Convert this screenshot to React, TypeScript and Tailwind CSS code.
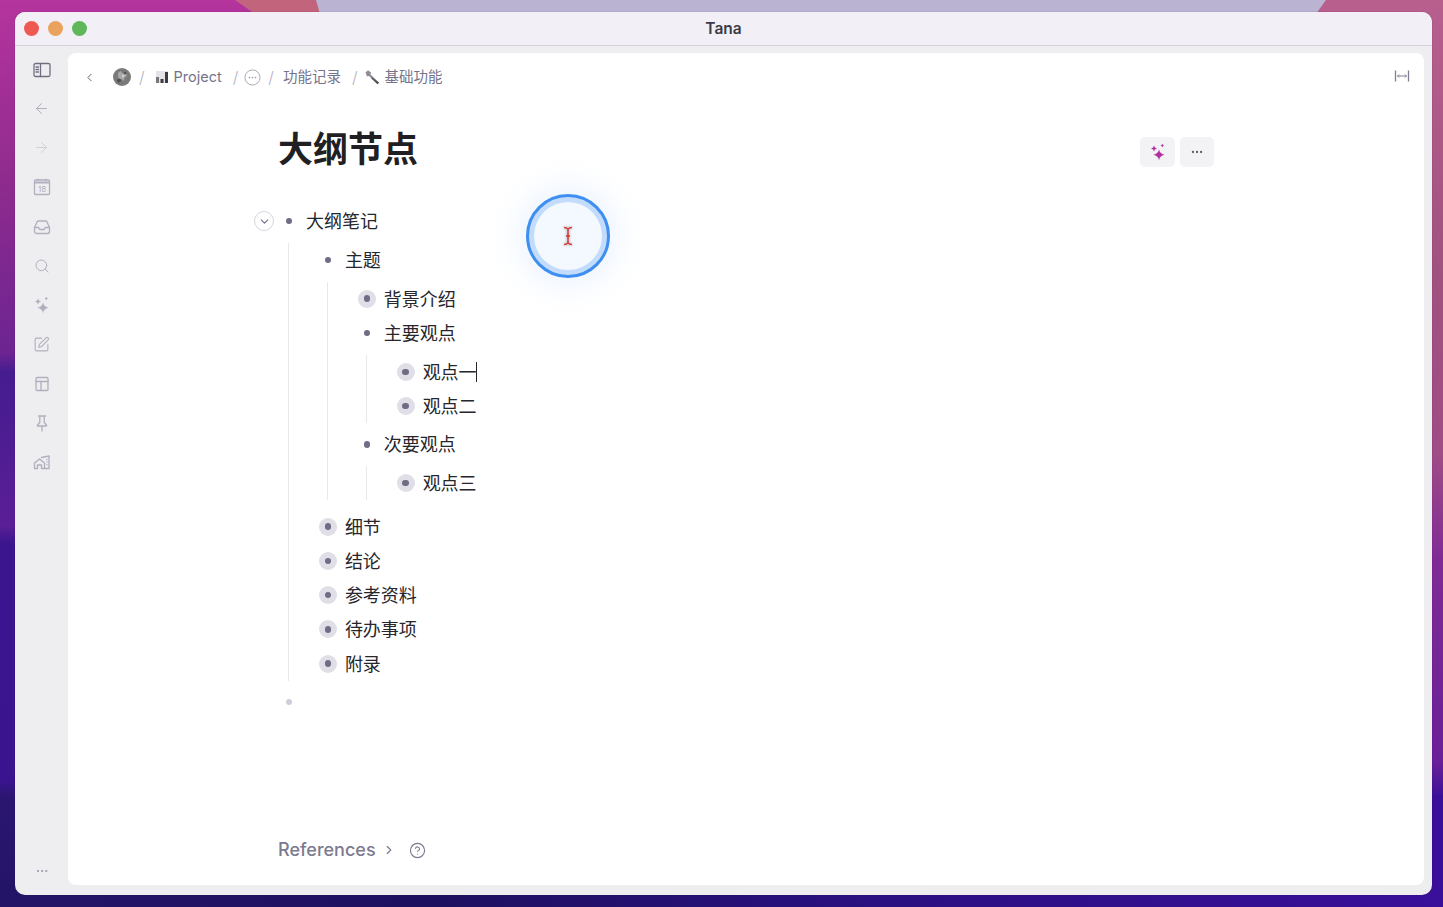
import { ArrowLeft, ArrowRight, ChevronDown, ChevronLeft, ChevronRight, CircleHelp, Ellipsis, Search, SquarePen } from 'lucide-react'
import type { ReactNode } from 'react'

type OutlineNode = {
	text: string
	// a halo round the bullet means the node has no children yet
	children?: OutlineNode[]
	caret?: boolean
	toggle?: boolean
}

const outline: OutlineNode[] = [
	{
		text: '大纲笔记',
		toggle: true,
		children: [
			{
				text: '主题',
				children: [
					{ text: '背景介绍' },
					{
						text: '主要观点',
						children: [{ text: '观点一', caret: true }, { text: '观点二' }],
					},
					{ text: '次要观点', children: [{ text: '观点三' }] },
				],
			},
			{ text: '细节' },
			{ text: '结论' },
			{ text: '参考资料' },
			{ text: '待办事项' },
			{ text: '附录' },
		],
	},
]

function Wallpaper() {
	return (
		<svg className="absolute inset-0 h-full w-full" viewBox="0 0 1443 907" preserveAspectRatio="none">
			<defs>
				<linearGradient id="wl" x1="0" y1="0" x2="0" y2="1">
					<stop offset="0" stopColor="#b5349e" />
					<stop offset="0.2" stopColor="#8f2b8e" />
					<stop offset="0.39" stopColor="#6c2492" />
					<stop offset="0.41" stopColor="#451c90" />
					<stop offset="0.58" stopColor="#5a1e96" />
					<stop offset="0.6" stopColor="#3a158e" />
					<stop offset="0.86" stopColor="#3a1490" />
					<stop offset="0.88" stopColor="#2a1670" />
					<stop offset="1" stopColor="#241468" />
				</linearGradient>
				<linearGradient id="wr" x1="0" y1="0" x2="0" y2="1">
					<stop offset="0" stopColor="#b85f8e" />
					<stop offset="0.3" stopColor="#a0527e" />
					<stop offset="0.5" stopColor="#a04c86" />
					<stop offset="0.62" stopColor="#7f2a96" />
					<stop offset="0.84" stopColor="#6a2098" />
					<stop offset="0.88" stopColor="#3a0f9a" />
					<stop offset="1" stopColor="#3a0f9a" />
				</linearGradient>
				<linearGradient id="wb" x1="0" y1="0" x2="1" y2="0">
					<stop offset="0" stopColor="#241468" />
					<stop offset="0.3" stopColor="#1e1060" />
					<stop offset="0.6" stopColor="#2a1080" />
					<stop offset="1" stopColor="#3a0f9a" />
				</linearGradient>
			</defs>
			<rect width="722" height="907" fill="url(#wl)" />
			<rect x="722" width="721" height="907" fill="url(#wr)" />
			<rect y="880" width="1443" height="27" fill="url(#wb)" />
			<polygon points="235,0 320,0 322,14 255,14" fill="#c2647c" />
			<polygon points="316,0 1326,0 1316,14 320,14" fill="#bab4d2" />
		</svg>
	)
}

function TrafficLights() {
	return (
		<div className="flex items-center gap-[9.5px] pl-[9px]">
			<span className="h-[14.5px] w-[14.5px] rounded-full bg-[#ee5a52]" />
			<span className="h-[14.5px] w-[14.5px] rounded-full bg-[#e9a35f]" />
			<span className="h-[14.5px] w-[14.5px] rounded-full bg-[#5fb75a]" />
		</div>
	)
}

function Glyph({ children, className = 'text-[#b0afbd]' }: { children: ReactNode; className?: string }) {
	return (
		<svg
			viewBox="0 0 18 18"
			className={`h-[18px] w-[18px] ${className}`}
			fill="none"
			stroke="currentColor"
			strokeWidth="1.3"
			strokeLinecap="round"
			strokeLinejoin="round"
		>
			{children}
		</svg>
	)
}

function Sparkles({ className }: { className?: string }) {
	return (
		<svg viewBox="0 0 18 18" className={`h-[18px] w-[18px] ${className ?? ''}`} fill="currentColor">
			<path d="M10 6.200Q10.500 10.500 15.600 11.800Q10.500 13 10 17.400Q9.500 13 4.400 11.800Q9.500 10.500 10 6.200z" />
			<path d="M5 2.400Q5.300 4.700 8 5.400Q5.300 6.100 5 8.400Q4.700 6.100 2 5.400Q4.700 4.700 5 2.400z" />
			<path d="M13.300 .8Q13.500 2.100 15 2.600Q13.500 3.100 13.300 4.400Q13.100 3.100 11.600 2.600Q13.100 2.100 13.300 .8z" />
		</svg>
	)
}

function Sidebar() {
	const line = 'text-[#b0afbd]'
	const slot = 'flex h-[39.300px] items-center'
	return (
		<div className="flex w-[53px] shrink-0 flex-col items-center pt-[15px]">
			<div className="flex h-[28px] flex-col items-center justify-start">
				<Glyph className="text-[#6f6d80]">
					<rect x="1" y="2.500" width="16" height="13" rx="1.500" />
					<path d="M7.500 2.500v13M3 6h2.500M3 8.500h2.500M3 11h2.500" />
				</Glyph>
			</div>
			<div className={slot}>
				<ArrowLeft size={17} strokeWidth={1.4} className={line} />
			</div>
			<div className={slot}>
				<ArrowRight size={17} strokeWidth={1.4} className="text-[#d0cfd8]" />
			</div>
			<div className={slot}>
				<svg viewBox="0 0 18 18" className={`h-[18px] w-[18px] ${line}`} fill="none" stroke="currentColor" strokeWidth="1.300">
					<rect x="1.500" y="2" width="15" height="14.500" rx="1" />
					<path d="M1.500 4.500h15" strokeWidth="2" />
					<path d="M5 .8v2M13 .8v2" />
					<text x="9" y="14" textAnchor="middle" fontSize="8" stroke="none" fill="currentColor" fontFamily="Inter, sans-serif">
						18
					</text>
				</svg>
			</div>
			<div className={slot}>
				<Glyph className={line}>
					<path d="M1.500 9.500l2.500-5.500a1.500 1.500 0 0 1 1.400-1h7.200a1.500 1.500 0 0 1 1.400 1l2.500 5.500v4a2 2 0 0 1-2 2h-11a2 2 0 0 1-2-2z" />
					<path d="M1.500 9.500h4l1.500 2h4l1.500-2h4" />
				</Glyph>
			</div>
			<div className={slot}>
				<Search size={16} strokeWidth={1.5} className={line} />
			</div>
			<div className={slot}>
				<Sparkles className={line} />
			</div>
			<div className={slot}>
				<SquarePen size={17} strokeWidth={1.5} className={line} />
			</div>
			<div className={slot}>
				<Glyph className={line}>
					<rect x="3" y="2.500" width="12" height="13" rx="1" />
					<path d="M3 6.500h12M8 6.500v9" />
				</Glyph>
			</div>
			<div className={slot}>
				<Glyph className={line}>
					<path d="M5.500 2h7M6.800 2v6.500L4.500 11v1h9v-1l-2.300-2.500V2M9 12v5" />
				</Glyph>
			</div>
			<div className={slot}>
				<Glyph className={line}>
					<path d="M1.500 15.500v-5.500l5-4 5 4v5.500h-3v-3.500h-4v3.500z" />
					<path d="M8.500 4.500l7.500-1.500v12.500h-4" />
					<path d="M14 6.500v.01M14 9v.01M14 11.500v.01" />
				</Glyph>
			</div>
			<div className="mt-auto flex h-[31px] items-start">
				<Ellipsis size={14} strokeWidth={1.5} className="text-[#8f8ea0]" />
			</div>
		</div>
	)
}

function Slash({ className }: { className: string }) {
	return <span className={`text-[16px] font-light text-[#b3b2c0] ${className}`}>/</span>
}

function Breadcrumb() {
	return (
		<div className="flex h-[48px] shrink-0 items-center text-[14.500px] text-[#75738a]">
			<ChevronLeft size={13} strokeWidth={1.8} className="ml-[15px] text-[#5f5d70]" />
			<svg viewBox="0 0 18 18" className="ml-[17px] h-[18px] w-[18px]">
				<circle cx="9" cy="9" r="9" fill="#7a7a7a" />
				<path d="M5 5l2.500-2 2 2.500 3-1 1.500 3.500-2.500 1.500-.5 3.500-2.500-2-3 1z" fill="#a9a9a9" />
				<circle cx="6" cy="12.500" r="2" fill="#4e4e4e" />
				<circle cx="12" cy="5" r="1.300" fill="#545454" />
				<circle cx="10" cy="8" r="1.200" fill="#d4d4d4" />
			</svg>
			<Slash className="ml-[8px]" />
			<svg viewBox="0 0 14 14" className="ml-[10px] h-[14px] w-[14px]">
				<rect x="1" y="1" width="12" height="12" fill="#e4e4e8" />
				<rect x="1" y="7" width="3" height="6" fill="#77777c" />
				<rect x="5.500" y="9" width="3" height="4" fill="#3b3b40" />
				<rect x="10" y="2" width="3" height="11" fill="#3b3b40" />
			</svg>
			<span className="ml-[5px]">Project</span>
			<Slash className="ml-[11px]" />
			<svg viewBox="0 0 18 18" className="ml-[6px] h-[17px] w-[17px] text-[#9a99a8]" fill="currentColor">
				<circle cx="9" cy="9" r="8" fill="none" stroke="currentColor" strokeWidth="0.9" />
				<circle cx="5.800" cy="9" r="0.900" />
				<circle cx="9" cy="9" r="0.900" />
				<circle cx="12.200" cy="9" r="0.900" />
			</svg>
			<Slash className="ml-[7px]" />
			<span className="ml-[9px]">功能记录</span>
			<Slash className="ml-[11px]" />
			<svg viewBox="0 0 16 16" className="ml-[7px] h-[16px] w-[16px]">
				<path d="M1.500 3.500L4 1.200 7 3.500 6.500 5.500 15 13.500 13.500 15.200 5 7 3 7.500z" fill="#8e8e94" />
				<path d="M8 8.500L15 13.500 13.500 15.200 6.800 8.800z" fill="#505057" />
			</svg>
			<span className="ml-[4px]">基础功能</span>
			<svg viewBox="0 0 16 14" className="mb-[2px] ml-auto mr-[14px] h-[14px] w-[16px] text-[#7f7e92]" fill="none" stroke="currentColor">
				<path d="M1.500 1.500v11M14.500 1.500v11" strokeWidth="1.300" />
				<path d="M3.500 7h9M5 5.500L3.500 7 5 8.500M11 5.500L12.500 7 11 8.500" strokeWidth="1" />
			</svg>
		</div>
	)
}

function Bullet({ halo }: { halo: boolean }) {
	return (
		<span className={`flex h-[18px] w-[18px] items-center justify-center rounded-full ${halo ? 'bg-[#e0dee6]' : ''}`}>
			<span className="h-[6.500px] w-[6.500px] rounded-full bg-[#6f6c85]" />
		</span>
	)
}

function OutlineRow({ node }: { node: OutlineNode }) {
	// a block whose last child is open again ends further from the next row
	const lastOpen = node.children?.at(-1)?.children
	return (
		<div>
			<div className="relative flex h-[34.300px] items-center">
				{node.toggle && (
					<span className="absolute left-[-23px] flex h-[20px] w-[20px] items-center justify-center rounded-full border border-[#d5d4de]">
						<ChevronDown size={13} strokeWidth={2} className="text-[#6f6c85]" />
					</span>
				)}
				<span className="flex w-[24px] shrink-0 justify-center">
					<Bullet halo={!node.children} />
				</span>
				<span className="ml-[5px] flex items-center pt-[1px] text-[18px] text-[#26262c]">
					{node.text}
					{node.caret && <span className="ml-[-1px] h-[20px] w-[1px] bg-[#26262c]" />}
				</span>
			</div>
			{node.children && (
				<div className={`ml-[11.200px] mt-[4.500px] border-l border-[#e9e9ed] pl-[26.700px] ${lastOpen ? 'mb-[9px]' : 'mb-[4px]'}`}>
					{node.children.map((child) => (
						<OutlineRow key={child.text} node={child} />
					))}
				</div>
			)}
		</div>
	)
}

function ClickHalo() {
	return (
		<div className="absolute left-[526px] top-[194px] flex h-[84px] w-[84px] items-center justify-center rounded-full border-[3px] border-[#3e8ff0] bg-[#c4dcfb] shadow-[0_0_28px_10px_rgba(200,222,255,0.3)]">
			<div className="flex h-[68px] w-[68px] items-center justify-center rounded-full bg-[#f4f8ff]">
				<svg viewBox="0 0 12 20" className="h-[22px] w-[12px] drop-shadow-[0_0_1.500px_rgba(90,90,90,0.6)]" fill="none" stroke="#d33a32" strokeWidth="1.500">
					<path d="M2 1.500c2 0 3 .5 4 1.500 1-1 2-1.500 4-1.500M6 3v14M4 10h4M2 18.500c2 0 3-.5 4-1.500 1 1 2 1.500 4 1.500" />
				</svg>
			</div>
		</div>
	)
}

export default function App() {
	return (
		<div
			className="relative h-[907px] w-full overflow-hidden pb-[12px] pl-[15px] pr-[11px] pt-[12px]"
			style={{ fontFamily: 'Inter, "Noto Sans CJK SC", sans-serif' }}
		>
			<Wallpaper />
			<div className="relative flex h-[883px] flex-col overflow-hidden rounded-[10px] bg-[#eeeef1] shadow-[0_0_1px_rgba(40,20,60,0.6)]">
				<div className="relative flex h-[34px] shrink-0 items-center border-b border-[#d4d2d8] bg-[#f3eff7]">
					<TrafficLights />
					<span className="absolute inset-x-0 text-center text-[15.500px] font-semibold text-[#3c3b45]">Tana</span>
				</div>
				<div className="flex min-h-0 flex-1">
					<Sidebar />
					<div className="mb-[10px] mr-[8px] mt-[7px] flex min-w-0 flex-1 flex-col rounded-[8px] bg-white">
						<Breadcrumb />
						<div className="flex h-[103px] shrink-0 items-start justify-between pl-[210px] pr-[210px] pt-[24px]">
							<h1 className="text-[35px] font-bold leading-[48px] text-[#1f1f24]">大纲节点</h1>
							<div className="mt-[12px] flex gap-[5px]">
								<span className="flex h-[30px] w-[35px] items-center justify-center rounded-[5px] bg-[#f3f3f6]">
									<Sparkles className="text-[#b5309f]" />
								</span>
								<span className="flex h-[30px] w-[34px] items-center justify-center rounded-[5px] bg-[#f3f3f6]">
									<Ellipsis size={14} strokeWidth={2} className="text-[#5f5d70]" />
								</span>
							</div>
						</div>
						<div className="pl-[209px]">
							{outline.map((node) => (
								<OutlineRow key={node.text} node={node} />
							))}
							<div className="flex h-[34px] items-center">
								<span className="flex w-[24px] justify-center">
									<span className="h-[6.500px] w-[6.500px] rounded-full bg-[#cfcdd8]" />
								</span>
							</div>
						</div>
						<div className="mt-auto flex h-[49px] items-start pl-[210px] text-[#7c7a90]">
							<span className="text-[18px] font-medium leading-[28px]">References</span>
							<ChevronRight size={14} strokeWidth={2} className="ml-[6px] mt-[7px]" />
							<CircleHelp size={17} strokeWidth={1.6} className="ml-[13px] mt-[5.500px]" />
						</div>
					</div>
				</div>
			</div>
			<ClickHalo />
		</div>
	)
}
